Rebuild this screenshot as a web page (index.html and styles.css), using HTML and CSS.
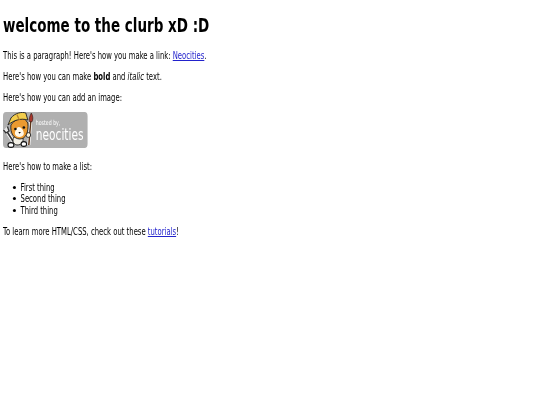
FILE: index.html
```html
<!DOCTYPE html>
<html lang="en">
<head>
  <meta charset="UTF-8" />
  <title>welcome to the clurb xD :D</title>
  <link rel="stylesheet" href="styles.css">
</head>
<body>
  <div class="page">
    <h1>welcome to the clurb xD :D</h1>

    <p>This is a paragraph! Here's how you make a link: <a href="#">Neocities</a>.</p>

    <p>Here's how you can make <strong>bold</strong> and <em>italic</em> text.</p>

    <p>Here's how you can add an image:</p>

    <div class="badge">
      <svg class="badge-cat" viewBox="0 0 33 36" preserveAspectRatio="none">
        <!-- wrench -->
        <path d="M3 18 L10 29" stroke="#fff" stroke-width="3.4" fill="none"/>
        <path d="M3 18 L10 29" stroke="#333" stroke-width="1.6" fill="none"/>
        <path d="M0.5 18 L3 21 L6 19 L4.5 14.5" stroke="#333" stroke-width="1.3" fill="#e8e8e8"/>
        <!-- brush -->
        <path d="M28 8 L26 33" stroke="#fff" stroke-width="3" fill="none"/>
        <path d="M28 9 L26 33" stroke="#5a3418" stroke-width="1.5" fill="none"/>
        <path d="M28.5 1 C30.5 4 30.5 8 29 10 L26.5 9.5 C26 7 27 4 28.5 1 Z" fill="#a8362c" stroke="#2e1512" stroke-width="0.6"/>
        <!-- body and feet -->
        <path d="M11 25 C9 29 10 32 14 33 C19 33 21 30 20 25 Z" fill="#f3f0e6" stroke="#222" stroke-width="0.9"/>
        <ellipse cx="8" cy="33" rx="3" ry="2.4" fill="#fff" stroke="#111" stroke-width="1.1"/>
        <ellipse cx="21" cy="32" rx="2.8" ry="2.4" fill="#fff" stroke="#111" stroke-width="1.1"/>
        <circle cx="25.5" cy="23" r="2.4" fill="#f8f0dc" stroke="#222" stroke-width="0.9"/>
        <!-- head -->
        <path d="M8 13 C7 21 11 27 17 27 C23 27 26 20 25 11 L22 7 C17 6 11 8 8 13 Z" fill="#eb9a30" stroke="#222" stroke-width="0.9"/>
        <path d="M12 22 C12 18 14 15 16 15 C18 15 21 18 21 22 C20 26 13 26 12 22 Z" fill="#fff7e8"/>
        <circle cx="12.5" cy="17" r="1.3" fill="#111"/>
        <circle cx="21" cy="15.5" r="1.3" fill="#111"/>
        <path d="M15.5 20 L18 20 L16.7 21.8 Z" fill="#111"/>
        <!-- hard hat -->
        <path d="M5 13 L8 6 C12 1 19 -0.5 23 1 L25 8 C18 6 11 8 5 13 Z" fill="#f2cd4c" stroke="#222" stroke-width="0.9"/>
        <path d="M14 2.5 L16.5 8" stroke="#b9832c" stroke-width="1.3" fill="none"/>
      </svg>
      <div class="badge-text">
        <span class="badge-hosted">hosted by,</span>
        <span class="badge-name">neocities</span>
      </div>
    </div>

    <p>Here's how to make a list:</p>

    <ul>
      <li>First thing</li>
      <li>Second thing</li>
      <li>Third thing</li>
    </ul>

    <p>To learn more HTML/CSS, check out these <a href="#">tutorials</a>!</p>
  </div>
</body>
</html>
```

FILE: styles.css
```css
body {
  margin: 0;
  padding: 0 3px;
  background-color: #fff;
  color: #000;
  font-family: "DejaVu Sans", sans-serif;
  font-stretch: condensed;
  font-size: 10px;
  line-height: 11.5px;
}

/* the whole page is squeezed sideways in the reference */
.page {
  width: 530px;
  transform: scaleX(0.762);
  transform-origin: left top;
  filter: blur(0.35px);
}

h1 {
  margin: 14px 0 12px;
  font-size: 19.7px;
  line-height: 24px;
  font-weight: bold;
}

p {
  margin: 9.5px 0;
}

a {
  color: #2222cc;
}

ul {
  margin: 9.5px 0;
  padding-left: 23px;
  list-style: none;
}

li {
  position: relative;
}

li::before {
  content: "";
  position: absolute;
  left: -10px;
  top: 4px;
  width: 4px;
  height: 3px;
  border-radius: 50%;
  background-color: #000;
}

.badge {
  display: flex;
  width: 111px;
  height: 36px;
  margin: -1px 0 12.5px;
  border-radius: 4px;
  background-color: #b0b0b0;
}

.badge-cat {
  flex: none;
  width: 43px;
  height: 36px;
}

.badge-text {
  display: flex;
  flex-direction: column;
  padding: 7px 0 0;
  color: #fff;
}

.badge-hosted {
  font-size: 6.8px;
  line-height: 8px;
}

.badge-name {
  font-size: 15.5px;
  line-height: 17px;
}
```
